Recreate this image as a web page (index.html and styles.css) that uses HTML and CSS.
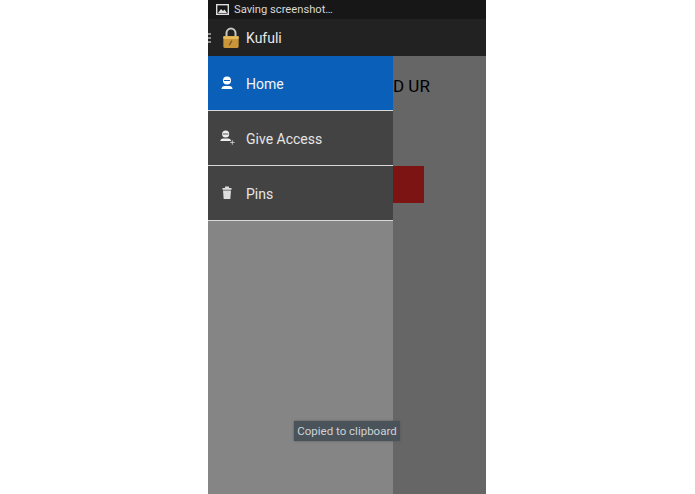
FILE: index.html
```html
<!DOCTYPE html>
<html>
<head>
<meta charset="utf-8">
<title>Kufuli</title>
<link rel="stylesheet" href="styles.css">
</head>
<body>
<div class="phone">
  <div class="status">
    <svg class="status-icon" width="13" height="11" viewBox="0 0 13 11"><rect x="0.7" y="0.7" width="11.6" height="9.6" fill="none" stroke="#ddd" stroke-width="1.4"/><path d="M2 9l3-4 2 2 1.5-1.5L11 9z" fill="#ddd"/></svg>
    <span>Saving screenshot…</span>
  </div>
  <div class="actionbar">
    <div class="burger"><i></i><i></i><i></i></div>
    <svg class="lock" width="18" height="22" viewBox="0 0 20 24"><path d="M5 11V6.500a5 5 0 0 1 10 0V11" fill="none" stroke="#c9c9c4" stroke-width="2.200"/><rect x="1.500" y="10" width="17" height="13" rx="1.500" fill="#c9963a"/><rect x="1.500" y="10" width="17" height="3" fill="#e8bc5c"/><path d="M8 20l3-5" stroke="#7a5a20" stroke-width="1.500"/></svg>
    <span class="title">Kufuli</span>
  </div>
  <div class="content">
    <nav class="drawer">
      <div class="item active">
        <svg class="icon" width="16" height="16" viewBox="0 0 16 16"><circle cx="8" cy="5.500" r="4" fill="#fff"/><path d="M2.500 14c0-2 1.500-3 3-3h5c1.500 0 3 1 3 3z" fill="#fff"/><rect x="5" y="5" width="6" height="1" fill="#0a5fb8"/></svg>
        <span>Home</span>
      </div>
      <div class="item">
        <svg class="icon" width="16" height="18" viewBox="0 0 18 18" overflow="visible"><circle cx="7.500" cy="4.500" r="4" fill="#eee"/><path d="M1.500 12.500c0-2 1.500-3 3-3h6c1.500 0 3 1 3 3z" fill="#eee"/><rect x="4.500" y="4" width="6" height="1" fill="#444"/><path d="M15 11.500v5M12.500 14h5" stroke="#ccc"/></svg>
        <span>Give Access</span>
      </div>
      <div class="item">
        <svg class="icon" width="16" height="16" viewBox="0 0 16 16"><rect x="3.500" y="3" width="9" height="1.800" fill="#ddd"/><rect x="6" y="1.500" width="4" height="1.500" fill="#ddd"/><path d="M4 5.500h8L11.300 14H4.700z" fill="#ddd"/></svg>
        <span>Pins</span>
      </div>
    </nav>
    <main class="main">
      <p class="heading">D UR</p>
      <div class="red"></div>
    </main>
  </div>
  <div class="toast">Copied to clipboard</div>
</div>
</body>
</html>
```
FILE: styles.css
```css
* { box-sizing: border-box; }
html, body { margin: 0; height: 100%; background: #fff; }
body { padding-left: 208px; font-family: "Roboto", "Liberation Sans", sans-serif; overflow: hidden; }
.phone { position: relative; width: 278px; height: 494px; display: flex; flex-direction: column; overflow: hidden; background: #666; }
.status { height: 19px; background: #171717; color: #d8d8d8; display: flex; align-items: center; padding-left: 8px; gap: 5px; font-size: 11.2px; }
.status-icon { flex: none; }
.actionbar { height: 37px; background: #222; display: flex; align-items: center; color: #e8e8e8; }
.burger { width: 3px; margin-right: 11px; display: flex; flex-direction: column; gap: 2px; }
.burger i { display: block; height: 2px; background: #8f8f8f; }
.lock { flex: none; margin-right: 6px; }
.title { font-size: 14px; }
.content { flex: 1; display: flex; min-height: 0; }
.drawer { width: 185px; background: #858585; flex: none; }
.item { height: 55px; background: #434343; border-bottom: 1px solid #d8d8d8; display: flex; align-items: center; color: #e6e6e6; font-size: 14px; padding-top: 2px; }
.item .icon { flex: none; margin-left: 11px; margin-right: 11px; margin-bottom: 2px; }
.item.active { background: #0a5fb8; color: #f4f4f4; }
.main { flex: 1; background: #666; }
.heading { margin: 20px 0 0 0; font-size: 17px; line-height: 20px; color: #000; }
.red { width: 31px; height: 37px; margin-top: 70px; background: #7c1414; }
.toast { position: absolute; left: 86px; top: 421px; width: 106px; height: 20px; background: #4a525a; color: #d0d3d6; font-size: 11.5px; display: flex; align-items: center; justify-content: center; box-shadow: 0 0 2px #555; }
```
